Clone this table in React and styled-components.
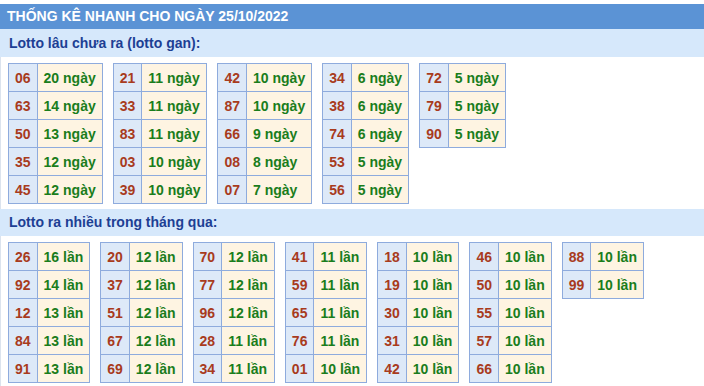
import React from "react";
import styled, { createGlobalStyle } from "styled-components";

const Global = createGlobalStyle`
  html, body { margin: 0; padding: 0; background: #fff; }
  body { font-family: "Liberation Sans", Arial, sans-serif; }
`;

const Page = styled.div`
  padding-top: 4px;
  width: 704px;
`;

const Title = styled.div`
  background: #5b93d5;
  color: #fff;
  font-weight: bold;
  font-size: 14px;
  height: 25px;
  line-height: 25px;
  padding-left: 7px;
  white-space: nowrap;
`;

const SubTitle = styled.div`
  background: #d6e8fb;
  color: #1d3f94;
  font-weight: bold;
  font-size: 14px;
  height: ${(p) => p.$h}px;
  line-height: ${(p) => p.$h}px;
  padding-left: 9px;
`;

const Group = styled.div`
  display: flex;
  align-items: flex-start;
  gap: ${(p) => p.$gap}px;
  padding: 6px 7px 5px;
  border-left: 1px solid #dbe3ee;
`;

const Table = styled.table`
  border-collapse: collapse;
  font-size: 14px;
  font-weight: bold;
`;

const Cell = styled.td`
  border: 1px solid #8eabdd;
  height: 27px;
  padding: 0 6px;
  white-space: nowrap;
  background: ${(p) => (p.$num ? "#dde9f8" : "#fef4e2")};
  color: ${(p) => (p.$num ? "#a83b1d" : "#1a7d1c")};
  line-height: 16px;
`;

const gan = [
  [["06", 20], ["63", 14], ["50", 13], ["35", 12], ["45", 12]],
  [["21", 11], ["33", 11], ["83", 11], ["03", 10], ["39", 10]],
  [["42", 10], ["87", 10], ["66", 9], ["08", 8], ["07", 7]],
  [["34", 6], ["38", 6], ["74", 6], ["53", 5], ["56", 5]],
  [["72", 5], ["79", 5], ["90", 5]],
];

const nhieu = [
  [["26", 16], ["92", 14], ["12", 13], ["84", 13], ["91", 13]],
  [["20", 12], ["37", 12], ["51", 12], ["67", 12], ["69", 12]],
  [["70", 12], ["77", 12], ["96", 12], ["28", 11], ["34", 11]],
  [["41", 11], ["59", 11], ["65", 11], ["76", 11], ["01", 10]],
  [["18", 10], ["19", 10], ["30", 10], ["31", 10], ["42", 10]],
  [["46", 10], ["50", 10], ["55", 10], ["57", 10], ["66", 10]],
  [["88", 10], ["99", 10]],
];

function LotoTable({ rows, unit }) {
  return (
    <Table>
      <tbody>
        {rows.map(([n, c]) => (
          <tr key={n}>
            <Cell $num>{n}</Cell>
            <Cell>
              {c} {unit}
            </Cell>
          </tr>
        ))}
      </tbody>
    </Table>
  );
}

export default function App() {
  return (
    <Page>
      <Global />
      <Title>THỐNG KÊ NHANH CHO NGÀY 25/10/2022</Title>
      <SubTitle $h={28}>Lotto lâu chưa ra (lotto gan):</SubTitle>
      <Group $gap={10}>
        {gan.map((rows, i) => (
          <LotoTable key={i} rows={rows} unit="ngày" />
        ))}
      </Group>
      <SubTitle $h={27}>Lotto ra nhiều trong tháng qua:</SubTitle>
      <Group $gap={10}>
        {nhieu.map((rows, i) => (
          <LotoTable key={i} rows={rows} unit="lần" />
        ))}
      </Group>
    </Page>
  );
}
